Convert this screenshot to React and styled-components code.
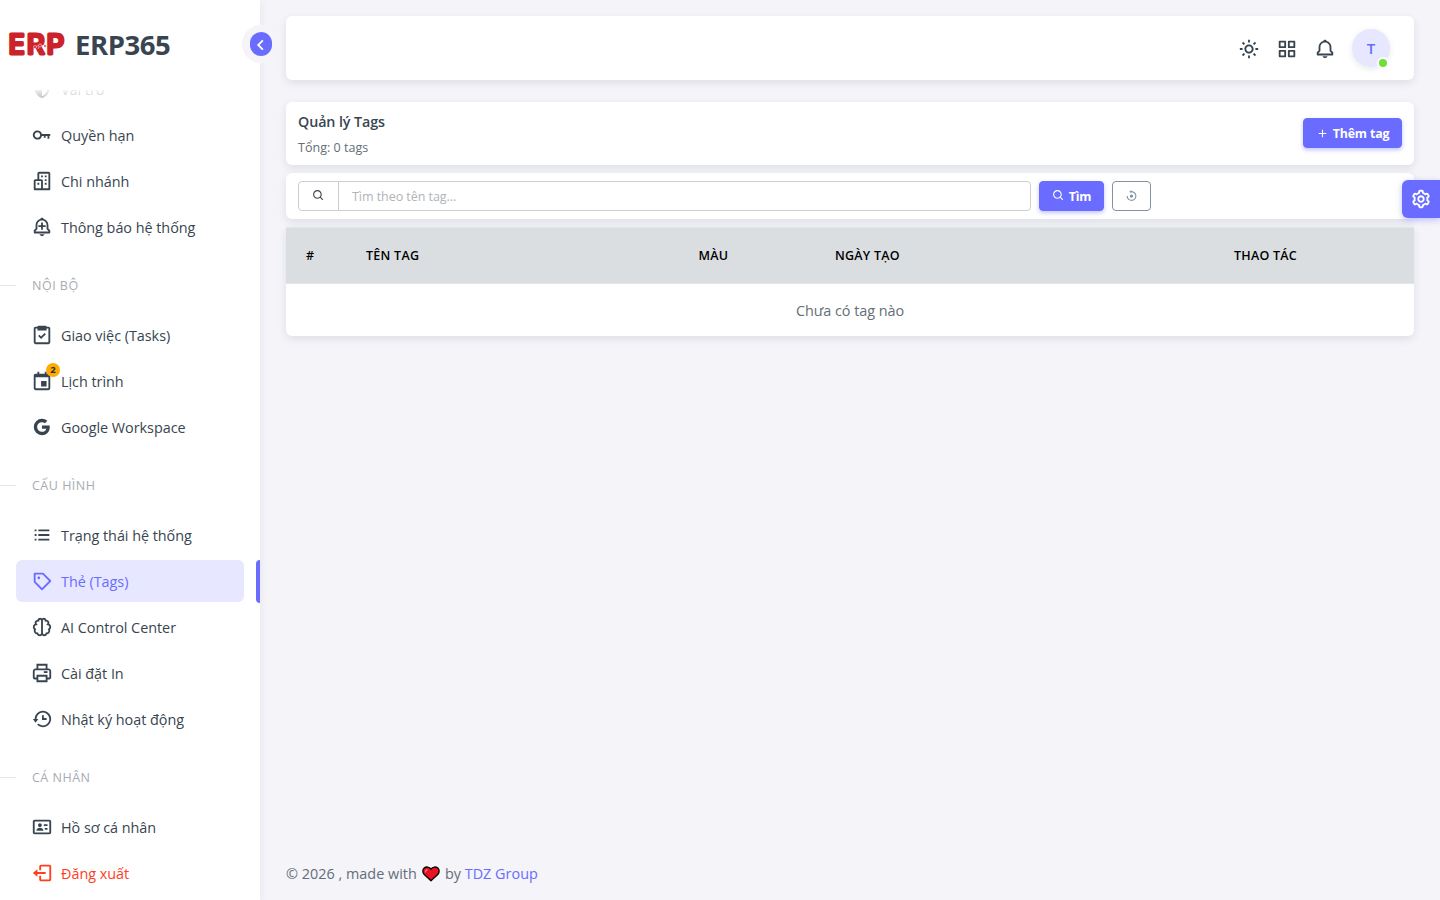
import React from 'react';
import styled, {createGlobalStyle, css} from 'styled-components';
import {
    BiBell, BiBellPlus, BiBrain, BiBuildings, BiCalendarEvent, BiChevronLeft, BiCog, BiGridAlt,
    BiHistory, BiIdCard, BiKey, BiListUl, BiLogoGoogle, BiLogOut, BiPlus, BiPrinter,
    BiPurchaseTag, BiReset, BiSearch, BiShieldQuarter, BiSun, BiTask
} from 'react-icons/bi';

const primary = '#696cff';
const primaryLight = '#e7e7ff';
const heading = '#384551';
const body = '#646e78';
const muted = '#a7acb2';
const pageBg = '#f4f4f9';
const cardShadow = 'box-shadow: 0 3px 8px 0 rgba(34, 48, 62, 0.1);';

const GlobalStyle = createGlobalStyle`
    * {
        box-sizing: border-box;
    }
    body {
        margin: 0;
        overflow: hidden;
        background: ${pageBg};
        color: ${body};
        font-family: 'Open Sans', 'Noto Sans', sans-serif;
        font-size: 14.4px;
        line-height: 22px;
        letter-spacing: -0.03px;
    }
    svg {
        display: block;
        flex-shrink: 0;
    }
`

const Layout = styled.div`
    display: flex;
    width: 1440px;
    height: 900px;
`

const Sidebar = styled.aside`
    position: relative;
    display: flex;
    flex-direction: column;
    width: 260px;
    height: 900px;
    background: #fff;
    box-shadow: 0 2px 8px 0 rgba(34, 48, 62, 0.08);
`

const Brand = styled.div`
    display: flex;
    align-items: center;
    flex-shrink: 0;
    height: 90px;
    padding: 0 0 1px 8px;
`

const BrandName = styled.span`
    margin-left: 7px;
    color: ${heading};
    font-size: 27.5px;
    font-weight: 700;
    line-height: 40px;
    letter-spacing: -0.45px;
`

const CollapseRing = styled.button`
    position: absolute;
    top: 25px;
    left: 242px;
    display: flex;
    align-items: center;
    justify-content: center;
    width: 38px;
    height: 38px;
    padding: 0;
    border: 0;
    border-radius: 50%;
    background: ${pageBg};
`

const CollapseDot = styled.span`
    display: flex;
    align-items: center;
    justify-content: center;
    width: 22px;
    height: 24px;
    border-radius: 11px;
    background: ${primary};
    color: #fff;
    svg {
        margin-top: 2px;
    }
`

const MenuViewport = styled.nav`
    position: relative;
    flex: 1;
    overflow: hidden;
    &::before {
        content: '';
        position: absolute;
        z-index: 1;
        top: 0;
        left: 0;
        right: 0;
        height: 14px;
        background: linear-gradient(rgba(255, 255, 255, 0.92), rgba(255, 255, 255, 0.5));
    }
`

const MenuList = styled.div`
    display: flex;
    flex-direction: column;
    gap: 4px;
    margin-top: -22px;
`

const MenuRow = styled.div`
    display: flex;
    justify-content: space-between;
    padding-left: 16px;
`

const MenuLink = styled.a`
    display: flex;
    align-items: center;
    width: 228px;
    height: 42px;
    padding: 1px 15px 0;
    border-radius: 6px;
    color: ${props => props.$danger ? '#ff3e1d' : heading};
    white-space: nowrap;
    svg {
        margin: -2px 8px 0 0;
    }
    ${props => props.$active && css`
        background: ${primaryLight};
        color: ${primary};
    `}
`

const ActiveBar = styled.span`
    width: 4px;
    height: 43px;
    margin-bottom: -1px;
    border-radius: 6px 0 0 6px;
    background: ${primary};
`

const IconHolder = styled.span`
    position: relative;
`

const CountBadge = styled.span`
    position: absolute;
    top: -9px;
    left: 15px;
    width: 14px;
    height: 14px;
    border-radius: 50%;
    background: #ffab00;
    color: #22303e;
    font-size: 9.5px;
    font-weight: 700;
    line-height: 14px;
    text-align: center;
`

const SectionHeader = styled.div`
    display: flex;
    align-items: center;
    height: 58px;
    padding-top: 9px;
    color: ${muted};
    font-size: 12.5px;
    letter-spacing: 0.5px;
    &::before {
        content: '';
        width: 16px;
        height: 1px;
        margin-right: 16px;
        background: #e4e6e8;
    }
`

const Main = styled.main`
    display: flex;
    flex: 1;
    flex-direction: column;
    padding: 16px 26px 0;
`

const Card = styled.section`
    display: flex;
    align-items: center;
    flex-shrink: 0;
    border-radius: 6px;
    background: #fff;
    ${cardShadow}
`

const Navbar = styled(Card)`
    justify-content: flex-end;
    height: 64px;
    gap: 16px;
    padding-right: 24px;
    color: ${heading};
    > svg {
        margin-top: 2px;
    }
`

const Avatar = styled.div`
    position: relative;
    width: 38px;
    height: 38px;
    border-radius: 50%;
    background: ${primaryLight};
    box-shadow: 0 2px 6px rgba(34, 48, 62, 0.1);
    color: ${primary};
    font-size: 15px;
    font-weight: 600;
    line-height: 39px;
    text-align: center;
    &::after {
        content: '';
        position: absolute;
        right: 1px;
        bottom: -2px;
        width: 12px;
        height: 12px;
        border: 2px solid #fff;
        border-radius: 50%;
        background: #71dd37;
        box-sizing: border-box;
    }
`

const TitleCard = styled(Card)`
    justify-content: space-between;
    height: 63px;
    margin-top: 22px;
    padding: 0 12px;
`

const Title = styled.h1`
    margin: 0;
    color: ${heading};
    font-size: 14.3px;
    font-weight: 600;
    line-height: 22px;
    letter-spacing: -0.1px;
`

const Subtitle = styled.div`
    margin-top: 5px;
    font-size: 12.5px;
    line-height: 20px;
    letter-spacing: 0.03px;
`

const TitleText = styled.div`
    padding-top: 1px;
`

const Button = styled.button`
    display: flex;
    align-items: center;
    justify-content: center;
    width: ${props => props.$width}px;
    height: 30px;
    gap: 4px;
    padding: 0;
    border: 1px solid ${primary};
    border-radius: 4px;
    background: ${primary};
    box-shadow: 0 2px 4px rgba(105, 108, 255, 0.4);
    color: #fff;
    font-family: inherit;
    font-size: 12.4px;
    font-weight: 700;
    letter-spacing: -0.15px;
    ${props => props.$outline && css`
        border-color: #8592a3;
        background: transparent;
        box-shadow: none;
        color: #8592a3;
    `}
    ${props => props.$raised && css`
        margin-bottom: 1px;
    `}
    svg {
        margin-bottom: ${props => props.$raised ? 0 : 1}px;
    }
`

const SearchCard = styled(Card)`
    height: 46px;
    margin-top: 8px;
    gap: 8px;
    padding: 0 12px;
`

const SearchGroup = styled.div`
    display: flex;
    width: 733px;
    height: 30px;
    border: 1px solid #cbcfd3;
    border-radius: 4px;
`

const SearchAddon = styled.span`
    display: flex;
    align-items: center;
    justify-content: center;
    width: 40px;
    padding-bottom: 2px;
    border-right: 1px solid #cbcfd3;
    color: ${heading};
`

const SearchInput = styled.input`
    flex: 1;
    padding: 0 13px;
    border: 0;
    outline: 0;
    background: transparent;
    font-family: inherit;
    font-size: 12.5px;
    letter-spacing: -0.05px;
    &::placeholder {
        color: #b0b4b9;
    }
`

const TableCard = styled.div`
    margin-top: 8px;
    overflow: hidden;
    border-radius: 0 0 6px 6px;
    background: #fff;
    ${cardShadow}
`

const Table = styled.table`
    width: 1128px;
    table-layout: fixed;
    border-collapse: separate;
    border-spacing: 0;
`

const HeadCell = styled.th`
    width: ${props => props.$width}px;
    height: 57px;
    padding: 0 20px;
    border-top: 1px solid #e4e6e8;
    border-bottom: 1px solid #e4e6e8;
    background: #dadee0;
    color: #000;
    font-size: 12.5px;
    font-weight: 600;
    letter-spacing: 0.25px;
    text-align: ${props => props.$center ? 'center' : 'left'};
`

const EmptyCell = styled.td`
    height: 52px;
    padding: 2px 0 0;
    text-align: center;
`

const Footer = styled.footer`
    display: flex;
    align-items: center;
    height: 52px;
    margin-top: auto;
    letter-spacing: 0.02px;
    white-space: pre;
    a {
        color: ${primary};
    }
    svg {
        margin: 0 5px;
    }
`

const SettingsTab = styled.button`
    position: fixed;
    top: 180px;
    right: 0;
    display: flex;
    align-items: center;
    justify-content: center;
    width: 38px;
    height: 38px;
    padding: 0;
    border: 0;
    border-radius: 6px 0 0 6px;
    background: ${primary};
    box-shadow: 0 2px 6px rgba(105, 108, 255, 0.4);
    color: #fff;
`

const Logo = () => (
    <svg width="60" height="36" viewBox="0 0 60 36">
        <g
            fontFamily="Inter, sans-serif" fontWeight="500" fontSize="26.5" letterSpacing="0"
            fill="#cc2229" stroke="#cc2229" strokeWidth="2.8" strokeLinejoin="round"
        >
            <text x="0.6" y="27" textLength="16.4" lengthAdjust="spacingAndGlyphs">E</text>
            <text x="18.8" y="27" textLength="18" lengthAdjust="spacingAndGlyphs">R</text>
            <text x="38.6" y="27" textLength="17.8" lengthAdjust="spacingAndGlyphs">P</text>
        </g>
        <g stroke="#fff" strokeWidth="0.5" fill="#cc2229">
            <path d="M27 20l5-2 5 1M32 18l-2 4" fill="none" />
            <circle cx="27" cy="20" r="1.5" />
            <circle cx="32" cy="18.5" r="1.5" />
            <circle cx="37" cy="19" r="1.2" />
        </g>
    </svg>
)

const Heart = () => (
    <svg width="18" height="16" viewBox="0 0 18 16">
        <path
            d="M9 14.8L2 8.2C.4 6.4.5 3.6 2.2 2.1c1.9-1.7 5-1.4 6.8.9 1.8-2.3 4.9-2.6 6.8-.9 1.7 1.5 1.8 4.3.2 6.1z"
            fill="#e81224" stroke="#000" strokeWidth="1.3" strokeLinejoin="round"
        />
        <path d="M3.5 5.8c.1-1 .7-1.8 1.6-2" fill="none" stroke="#f9836b" strokeWidth="1.3" strokeLinecap="round" />
    </svg>
)

const menu = [
    {label: 'Vai trò', icon: BiShieldQuarter},
    {label: 'Quyền hạn', icon: BiKey},
    {label: 'Chi nhánh', icon: BiBuildings},
    {label: 'Thông báo hệ thống', icon: BiBellPlus},
    {section: 'NỘI BỘ'},
    {label: 'Giao việc (Tasks)', icon: BiTask},
    {label: 'Lịch trình', icon: BiCalendarEvent, count: 2},
    {label: 'Google Workspace', icon: BiLogoGoogle},
    {section: 'CẤU HÌNH'},
    {label: 'Trạng thái hệ thống', icon: BiListUl},
    {label: 'Thẻ (Tags)', icon: BiPurchaseTag, active: true},
    {label: 'AI Control Center', icon: BiBrain},
    {label: 'Cài đặt In', icon: BiPrinter},
    {label: 'Nhật ký hoạt động', icon: BiHistory},
    {section: 'CÁ NHÂN'},
    {label: 'Hồ sơ cá nhân', icon: BiIdCard},
    {label: 'Đăng xuất', icon: BiLogOut, danger: true},
];

const MenuItem = ({label, icon: Icon, active, danger, count}) => {
    return (
        <MenuRow>
            <MenuLink $active={active} $danger={danger}>
                <IconHolder>
                    <Icon size={22}/>
                    {count && <CountBadge>{count}</CountBadge>}
                </IconHolder>
                {label}
            </MenuLink>
            {active && <ActiveBar/>}
        </MenuRow>
    )
}

const App = () => {
    return (
        <Layout>
            <GlobalStyle/>
            <Sidebar>
                <Brand>
                    <Logo/>
                    <BrandName>ERP365</BrandName>
                </Brand>
                <MenuViewport>
                    <MenuList>
                        {menu.map(item => item.section
                            ? <SectionHeader key={item.section}>{item.section}</SectionHeader>
                            : <MenuItem key={item.label} {...item}/>
                        )}
                    </MenuList>
                </MenuViewport>
                <CollapseRing>
                    <CollapseDot><BiChevronLeft size={22}/></CollapseDot>
                </CollapseRing>
            </Sidebar>
            <Main>
                <Navbar>
                    <BiSun size={22}/>
                    <BiGridAlt size={22}/>
                    <BiBell size={22}/>
                    <Avatar>T</Avatar>
                </Navbar>
                <TitleCard>
                    <TitleText>
                        <Title>Quản lý Tags</Title>
                        <Subtitle>Tổng: 0 tags</Subtitle>
                    </TitleText>
                    <Button $width={99} $raised><BiPlus size={13}/>Thêm tag</Button>
                </TitleCard>
                <SearchCard>
                    <SearchGroup>
                        <SearchAddon><BiSearch size={13}/></SearchAddon>
                        <SearchInput placeholder="Tìm theo tên tag..."/>
                    </SearchGroup>
                    <Button $width={65}><BiSearch size={13}/>Tìm</Button>
                    <Button $width={39} $outline><BiReset size={13}/></Button>
                </SearchCard>
                <TableCard>
                    <Table>
                        <thead>
                            <tr>
                                <HeadCell $width={60}>#</HeadCell>
                                <HeadCell $width={266}>TÊN TAG</HeadCell>
                                <HeadCell $width={203} $center>MÀU</HeadCell>
                                <HeadCell $width={302}>NGÀY TẠO</HeadCell>
                                <HeadCell $width={297} $center>THAO TÁC</HeadCell>
                            </tr>
                        </thead>
                        <tbody>
                            <tr>
                                <EmptyCell colSpan={5}>Chưa có tag nào</EmptyCell>
                            </tr>
                        </tbody>
                    </Table>
                </TableCard>
                <Footer>
                    <span>© 2026 , made with</span>
                    <Heart/>
                    <span>by <a>TDZ Group</a></span>
                </Footer>
            </Main>
            <SettingsTab><BiCog size={22}/></SettingsTab>
        </Layout>
    );
}

export default App;
